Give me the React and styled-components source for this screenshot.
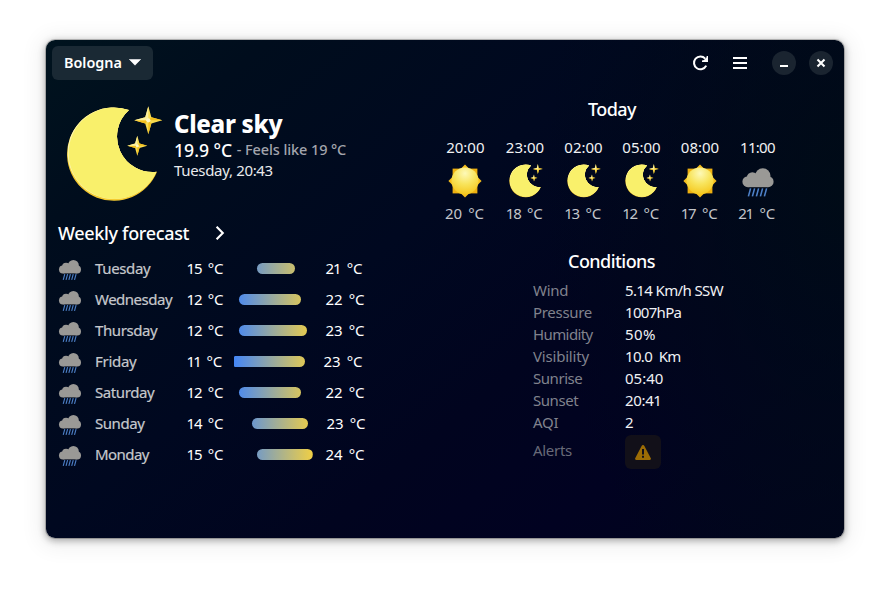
import React, { useId } from "react";
import styled, { createGlobalStyle } from "styled-components";

const GlobalStyle = createGlobalStyle`
  *, *::before, *::after { box-sizing: border-box; }
  body {
    margin: 0;
    background: #fff;
    font-family: "Noto Sans", "Open Sans", sans-serif;
    font-size: 15px;
    color: #fff;
  }
  button {
    font: inherit;
    color: inherit;
    border: 0;
    padding: 0;
    background: none;
  }
  svg { display: block; flex: none; }
`;

const Desktop = styled.div`
  width: 890px;
  height: 590px;
  padding: 40px 46px 52px;
  overflow: hidden;
`;

const Window = styled.main`
  height: 498px;
  border-radius: 9px;
  background:
    radial-gradient(ellipse 300px 480px at 100% 30%, rgba(0, 12, 22, 0.9), rgba(0, 10, 24, 0) 100%),
    linear-gradient(140deg, #00131e 0%, #000d1d 16%, #000820 42%, #01041f 62%, #010221 78%, #01051c 100%);
  box-shadow:
    0 0 0 1px rgba(0, 0, 0, 0.2),
    0 2px 7px 1px rgba(0, 0, 0, 0.3),
    0 3px 20px 8px rgba(0, 0, 0, 0.055);
`;

const HeaderBar = styled.header`
  height: 46px;
  padding: 0 11px 0 6px;
  display: flex;
  align-items: center;
`;

const CityButton = styled.button`
  width: 101px;
  height: 34px;
  padding: 0 0 1px 12px;
  display: flex;
  align-items: center;
  gap: 7px;
  border-radius: 6px;
  background: #1a2934;
  font-size: 14.4px;
  font-weight: 600;
  line-height: 33px;
`;

const HeaderActions = styled.div`
  margin-left: auto;
  display: flex;
  align-items: center;
`;

const IconButton = styled.button`
  width: 40px;
  height: 34px;
  display: grid;
  place-items: center;
`;

const WindowButton = styled.button`
  width: 24px;
  height: 24px;
  margin-left: ${(p) => p.$gap}px;
  display: grid;
  place-items: center;
  border-radius: 50%;
  background: #1a2430;
`;

const Content = styled.div`
  display: grid;
  grid-template-columns: 387px 1fr;
`;

const LeftPane = styled.section`
  padding: 20px 0 0 12px;
`;

const Current = styled.div`
  height: 96px;
  padding-left: 8px;
  display: flex;
  gap: 11px;
`;

const Summary = styled.div`
  padding-top: 3px;
  display: flex;
  flex-direction: column;
  white-space: pre;
`;

const Condition = styled.h1`
  margin: 0;
  font-size: 24px;
  font-weight: 800;
  line-height: 30px;
  letter-spacing: -0.3px;
`;

const TemperatureLine = styled.div`
  height: 22px;
  display: flex;
  align-items: flex-start;
  gap: 4.5px;
`;

const Temperature = styled.span`
  font-size: 17.6px;
  font-weight: 500;
  line-height: 23px;
`;

const FeelsLike = styled.span`
  font-size: 14.5px;
  font-weight: 500;
  line-height: 21px;
  letter-spacing: -0.1px;
  color: #a3a5ad;
`;

const LocalTime = styled.div`
  height: 19px;
  line-height: 18px;
  letter-spacing: -0.33px;
  color: #e9eaec;
`;

const SectionTitle = styled.h2`
  margin: 0;
  font-size: 18px;
  font-weight: 500;
  line-height: 26px;
  letter-spacing: ${(p) => p.$tracking ?? -0.55}px;
  white-space: pre;
`;

const WeeklyHeader = styled.div`
  margin-top: 18px;
  display: flex;
  align-items: center;
  gap: 26px;
`;

const DayList = styled.div`
  margin-top: 7px;
`;

const DayRow = styled.div`
  height: 31px;
  display: grid;
  grid-template-columns: 37px 91.5px 47.5px 91.5px 1fr;
  align-items: center;
`;

const DayName = styled.span`
  line-height: 20px;
  padding-bottom: 2px;
  letter-spacing: ${(p) => p.$tracking}px;
  color: #c6c8cc;
  -webkit-text-stroke: 0.2px #c6c8cc;
`;

const Reading = styled.span`
  display: flex;
  gap: 6.4px;
  line-height: 20px;
  padding-bottom: 2px;
  margin-left: ${(p) => p.$shift ?? 0}px;
`;

const Digits = styled.span`
  letter-spacing: ${(p) => p.$tracking}px;
`;

const Unit = styled.span`
  letter-spacing: -0.2px;
`;

const RangeTrack = styled.div`
  width: 80px;
  height: 11px;
  overflow: hidden;
  border-radius: 1px;
`;

const RangeBar = styled.div`
  width: ${(p) => p.$to - p.$from}px;
  height: 11px;
  margin-left: ${(p) => p.$from}px;
  border-radius: 6px;
  background: linear-gradient(90deg, #4486f7, #f0cf45) ${(p) => -p.$from}px 0 / 79px 11px no-repeat;
`;

const RightPane = styled.section`
  padding-top: 10px;
  display: flex;
  flex-direction: column;
`;

const TodayTitle = styled.div`
  padding-left: 155px;
`;

const HourStrip = styled.div`
  margin-top: 18px;
  padding-left: 2.3px;
  display: grid;
  grid-template-columns: 60px 59.4px 57.6px 58.4px 58.6px 56.4px;
`;

const Hour = styled.div`
  display: flex;
  flex-direction: column;
  align-items: center;
`;

const HourTime = styled.span`
  height: 24px;
  line-height: 15px;
  letter-spacing: ${(p) => p.$tracking}px;
  color: #f0f1f3;
`;

const HourIcon = styled.div`
  padding-left: ${(p) => (p.$kind === "sun" ? 0 : 1.4)}px;
`;

const HourReading = styled.div`
  margin: 5px 1.8px 0 0;
  color: #c3c5ca;
`;

const ConditionsBlock = styled.div`
  margin-top: 23px;
  padding-left: 100px;
`;

const ConditionsTitle = styled.div`
  padding-left: 35px;
`;

const ConditionList = styled.dl`
  margin: 6px 0 0;
  display: grid;
  grid-template-columns: 92px 1fr;
  grid-auto-rows: 22px;
  line-height: 21px;
  white-space: pre;
`;

const Label = styled.dt`
  letter-spacing: ${(p) => p.$tracking ?? -0.3}px;
  color: ${(p) => (p.$dim ? "#686a78" : "#80828d")};
`;

const Value = styled.dd`
  margin: 0;
  letter-spacing: ${(p) => p.$tracking ?? 0}px;
  color: #f0f1f4;
`;

const AlertRow = styled.div`
  height: 34px;
  margin-top: 1px;
  display: grid;
  grid-template-columns: 92px 1fr;
  line-height: 31px;
`;

const AlertButton = styled.button`
  width: 36px;
  height: 34px;
  display: grid;
  place-items: center;
  border-radius: 6px;
  background: #121019;
`;

function Star({ x, y, r }) {
  const k = r * 0.22;
  return (
    <g transform={`translate(${x} ${y})`}>
      <path
        d={`M0 ${-r}L${k} ${-k}L${r} 0L${k} ${k}L0 ${r}L${-k} ${k}L${-r} 0L${-k} ${-k}Z`}
        fill="#f8dc50"
      />
      <path d={`M0 0L${k} ${-k}L${r} 0ZM0 0L${k} ${k}L0 ${r}ZM0 0L${-k} ${k}L${-r} 0Z`} fill="#f3bf1d" />
      <path d={`M0 0L${-k} ${-k}L0 ${-r}ZM0 0L${-k} ${-k}L${-r} 0Z`} fill="#fbf0a0" />
      <circle r={r * 0.15} fill="#fdf6c4" />
    </g>
  );
}

function MoonIcon({ size }) {
  const crescent = "M63 4A46.7 46.7 0 1 0 91 65.8A35.5 35.5 0 0 1 63 4Z";
  const id = useId();
  return (
    <svg width={size} height={size} viewBox="0 0 97 97">
      <clipPath id={id}>
        <path d={crescent} />
      </clipPath>
      <path d={crescent} fill="#f5cb30" />
      <g clipPath={`url(#${id})`}>
        <circle cx="48" cy="46.6" r="46.4" fill="#fbf6b8" />
        <circle cx="48.4" cy="47.2" r="45.8" fill="#f9f06b" />
      </g>
      <Star x={82.3} y={14.3} r={14} />
      <Star x={71.3} y={39.7} r={10} />
    </svg>
  );
}

function SunIcon() {
  const id = useId();
  return (
    <svg width="34" height="34" viewBox="0 0 34 34">
      <defs>
        <radialGradient id={id} cx="0.5" cy="0.22" r="0.8">
          <stop offset="0" stopColor="#fdf9b8" />
          <stop offset="0.5" stopColor="#f8e45c" />
          <stop offset="1" stopColor="#f5c61c" />
        </radialGradient>
      </defs>
      <path d="M4.6 4.6H29.4V29.4H4.6Z" fill="#eeb010" />
      <path d="M17 0.4L33.6 17L17 33.6L0.4 17Z" fill="#f5bd1c" />
      <circle cx="17" cy="16.9" r="13.5" fill={`url(#${id})`} />
    </svg>
  );
}

function RainIcon({ size }) {
  return (
    <svg width={size} height={size} viewBox="0 0 34 34">
      <g fill="#9a9996">
        <circle cx="21.8" cy="11.9" r="7.7" />
        <circle cx="11.4" cy="13.8" r="5.6" />
        <circle cx="6.9" cy="17.7" r="5.5" />
        <circle cx="27.1" cy="17.7" r="5.5" />
        <path d="M6.9 14H27.1V23.2H6.9Z" />
      </g>
      <path
        d="M9.6 24.4L7.4 32.4M13.6 24.4L11.4 32.4M17.6 24.4L15.4 32.4M21.6 24.4L19.4 32.4M25.6 24.4L23.4 32.4"
        stroke="#4d80c8"
        strokeWidth="1.6"
      />
    </svg>
  );
}

function WeatherIcon({ kind, size = 34 }) {
  if (kind === "sun") return <SunIcon />;
  if (kind === "moon") return <MoonIcon size={size} />;
  return <RainIcon size={size} />;
}

/* Narrow figures such as "1" are drawn closer to their neighbours. */
const digitTracking = (n) => [-0.2, -1.1, -1.8][String(n).split("1").length - 1];

function Degrees({ value, shift }) {
  return (
    <Reading $shift={shift}>
      <Digits $tracking={digitTracking(value)}>{value}</Digits>
      <Unit>°C</Unit>
    </Reading>
  );
}

const days = [
  { name: "Tuesday", tracking: -0.35, min: 15, max: 21, from: 23.2, to: 60.8 },
  { name: "Wednesday", tracking: -0.5, min: 12, max: 22, from: 5.4, to: 66.6 },
  { name: "Thursday", tracking: -0.4, min: 12, max: 23, from: 5.4, to: 72.6 },
  { name: "Friday", tracking: -0.3, min: 11, max: 23, from: -4, to: 70.6, shift: -2 },
  { name: "Saturday", tracking: -0.4, min: 12, max: 22, from: 5.4, to: 66.6 },
  { name: "Sunday", tracking: -0.45, min: 14, max: 23, from: 18.2, to: 73.7, shift: 1 },
  { name: "Monday", tracking: -0.55, min: 15, max: 24, from: 23.2, to: 78.6 },
];

const hours = [
  { time: "20:00", kind: "sun", temp: 20 },
  { time: "23:00", kind: "moon", temp: 18 },
  { time: "02:00", kind: "moon", temp: 13 },
  { time: "05:00", kind: "moon", temp: 12 },
  { time: "08:00", kind: "sun", temp: 17 },
  { time: "11:00", kind: "rain", temp: 21, tracking: -0.7 },
];

const conditions = [
  { label: "Wind", value: "5.14 Km/h SSW", tracking: -0.63 },
  { label: "Pressure", value: "1007hPa", tracking: -0.68 },
  { label: "Humidity", value: "50%", tracking: 0.4, labelTracking: -0.6 },
  { label: "Visibility", value: "10.0  Km", tracking: -0.65, labelTracking: -0.2 },
  { label: "Sunrise", value: "05:40", labelTracking: -0.45 },
  { label: "Sunset", value: "20:41", tracking: -0.35, labelTracking: -0.45 },
  { label: "AQI", value: "2" },
];

export default function App() {
  return (
    <Desktop>
      <GlobalStyle />
      <Window>
        <HeaderBar>
          <CityButton>
            Bologna
            <svg width="12" height="7" viewBox="0 0 12 7">
              <path d="M0.4 0.4H11.6L6 6.2Z" fill="#fff" stroke="#fff" strokeWidth="0.6" strokeLinejoin="round" />
            </svg>
          </CityButton>
          <HeaderActions>
            <IconButton aria-label="Refresh">
              <svg width="17" height="16" viewBox="0 0 17 16">
                <path d="M13.2 3.6A6.4 6.4 0 1 0 14.2 10.6" fill="none" stroke="#fff" strokeWidth="2" />
                <path d="M16 1V7H10V5.4L12 4.9L14.6 2.2V1Z" fill="#fff" />
              </svg>
            </IconButton>
            <IconButton aria-label="Menu">
              <svg width="14" height="12" viewBox="0 0 14 12">
                <path d="M0 0H14V2H0ZM0 5H14V7H0ZM0 10H14V12H0Z" fill="#fff" />
              </svg>
            </IconButton>
            <WindowButton $gap={12} aria-label="Minimize">
              <svg width="8" height="8" viewBox="0 0 8 8">
                <path d="M0 6H8V8H0Z" fill="#fff" />
              </svg>
            </WindowButton>
            <WindowButton $gap={13} aria-label="Close">
              <svg width="10" height="10" viewBox="0 0 10 10">
                <path d="M1.5 1.5L8.5 8.5M8.5 1.5L1.5 8.5" stroke="#fff" strokeWidth="2.1" />
              </svg>
            </WindowButton>
          </HeaderActions>
        </HeaderBar>
        <Content>
          <LeftPane>
            <Current>
              <MoonIcon size={97} />
              <Summary>
                <Condition>Clear sky</Condition>
                <TemperatureLine>
                  <Temperature>19.9 °C</Temperature>
                  <FeelsLike>- Feels like 19 °C</FeelsLike>
                </TemperatureLine>
                <LocalTime>Tuesday, 20:43</LocalTime>
              </Summary>
            </Current>
            <WeeklyHeader>
              <SectionTitle $tracking={-0.33}>Weekly forecast</SectionTitle>
              <svg width="10" height="14" viewBox="0 0 10 14">
                <path d="M1.6 0.7L7.8 7L1.6 13.3" fill="none" stroke="#fff" strokeWidth="2.1" />
              </svg>
            </WeeklyHeader>
            <DayList>
              {days.map((d) => (
                <DayRow key={d.name}>
                  <WeatherIcon kind="rain" size={24} />
                  <DayName $tracking={d.tracking}>{d.name}</DayName>
                  <Degrees value={d.min} />
                  <RangeTrack>
                    <RangeBar $from={d.from} $to={d.to} />
                  </RangeTrack>
                  <Degrees value={d.max} shift={d.shift} />
                </DayRow>
              ))}
            </DayList>
          </LeftPane>
          <RightPane>
            <TodayTitle>
              <SectionTitle>Today</SectionTitle>
            </TodayTitle>
            <HourStrip>
              {hours.map((h) => (
                <Hour key={h.time}>
                  <HourTime $tracking={h.tracking ?? 0}>{h.time}</HourTime>
                  <HourIcon $kind={h.kind}>
                    <WeatherIcon kind={h.kind} />
                  </HourIcon>
                  <HourReading>
                    <Degrees value={h.temp} />
                  </HourReading>
                </Hour>
              ))}
            </HourStrip>
            <ConditionsBlock>
              <ConditionsTitle>
                <SectionTitle>Conditions</SectionTitle>
              </ConditionsTitle>
              <ConditionList>
                {conditions.map((c) => (
                  <React.Fragment key={c.label}>
                    <Label $tracking={c.labelTracking}>{c.label}</Label>
                    <Value $tracking={c.tracking}>{c.value}</Value>
                  </React.Fragment>
                ))}
              </ConditionList>
              <AlertRow>
                <Label as="span" $dim>Alerts</Label>
                <AlertButton aria-label="Show alerts">
                  <svg width="16" height="15" viewBox="0 0 16 15">
                    <path
                      fillRule="evenodd"
                      d="M8 0C8.6 0 9.1 0.3 9.4 0.9L15.8 13.2C16.2 14 15.7 15 14.8 15H1.2C0.3 15 -0.2 14 0.2 13.2L6.6 0.9C6.9 0.3 7.4 0 8 0ZM7 4V9.4H9V4ZM7 10.8V12.8H9V10.8Z"
                      fill="#9c6c05"
                    />
                  </svg>
                </AlertButton>
              </AlertRow>
            </ConditionsBlock>
          </RightPane>
        </Content>
      </Window>
    </Desktop>
  );
}
